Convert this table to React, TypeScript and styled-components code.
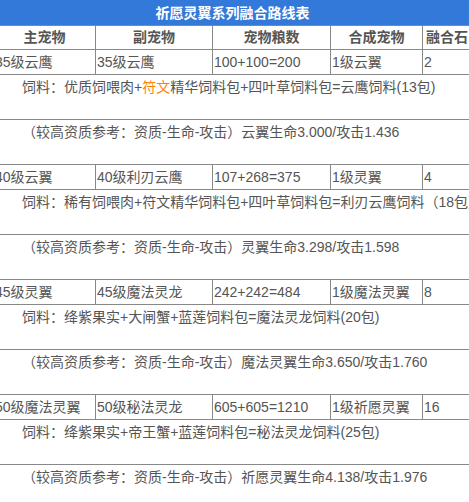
import React from "react";
import styled, { createGlobalStyle } from "styled-components";

const Global = createGlobalStyle`
  html, body { margin: 0; padding: 0; background: #fff; }
  body { overflow: hidden; }
`;

const Viewport = styled.div`
  width: 469px;
  overflow: hidden;
`;

const Table = styled.table`
  margin-left: -7px;
  width: 478px;
  border-collapse: collapse;
  table-layout: fixed;
  font-family: "Liberation Sans", "Noto Sans CJK SC", sans-serif;
  font-size: 14px;
  color: #555;
`;

const Col = styled.col<{ $w: number }>`
  width: ${(p) => p.$w}px;
`;

const TitleCell = styled.th`
  height: 24px;
  padding: 0;
  background: #3379d9;
  color: #fff;
  font-weight: bold;
  font-size: 14px;
  line-height: 24px;
  text-align: center;
  border: 1px solid #3379d9;
  border-bottom: 1px solid #888;
`;

const HeadCell = styled.th`
  height: 23px;
  padding: 0;
  font-weight: bold;
  color: #555;
  line-height: 23px;
  text-align: center;
  border: 1px solid #888;
`;

const DataCell = styled.td`
  height: 24px;
  padding: 0 0 0 1px;
  line-height: 24px;
  text-align: left;
  white-space: nowrap;
  overflow: hidden;
  border: 1px solid #888;
`;

const NoteCell = styled.td`
  height: 42px;
  padding: 2px 0 0;
  vertical-align: top;
  text-align: left;
  text-indent: 2em;
  white-space: nowrap;
  overflow: hidden;
  line-height: 21px;
  border: 1px solid #888;
`;

const Accent = styled.span`
  color: #ff8200;
`;

type Group = {
  cells: string[];
  feed: React.ReactNode;
  ref: string;
};

const groups: Group[] = [
  {
    cells: ["35级云鹰", "35级云鹰", "100+100=200", "1级云翼", "2"],
    feed: (
      <>
        饲料：优质饲喂肉+<Accent>符文</Accent>精华饲料包+四叶草饲料包=云鹰饲料(13包)
      </>
    ),
    ref: "（较高资质参考：资质-生命-攻击）云翼生命3.000/攻击1.436",
  },
  {
    cells: ["40级云翼", "40级利刃云鹰", "107+268=375", "1级灵翼", "4"],
    feed: "饲料：稀有饲喂肉+符文精华饲料包+四叶草饲料包=利刃云鹰饲料（18包）",
    ref: "（较高资质参考：资质-生命-攻击）灵翼生命3.298/攻击1.598",
  },
  {
    cells: ["45级灵翼", "45级魔法灵龙", "242+242=484", "1级魔法灵翼", "8"],
    feed: "饲料：绛紫果实+大闸蟹+蓝莲饲料包=魔法灵龙饲料(20包)",
    ref: "（较高资质参考：资质-生命-攻击）魔法灵翼生命3.650/攻击1.760",
  },
  {
    cells: ["50级魔法灵翼", "50级秘法灵龙", "605+605=1210", "1级祈愿灵翼", "16"],
    feed: "饲料：绛紫果实+帝王蟹+蓝莲饲料包=秘法灵龙饲料(25包)",
    ref: "（较高资质参考：资质-生命-攻击）祈愿灵翼生命4.138/攻击1.976",
  },
];

const headers = ["主宠物", "副宠物", "宠物粮数", "合成宠物", "融合石"];
const widths = [102, 117, 118, 92, 49];

export default function App() {
  return (
    <>
      <Global />
      <Viewport>
        <Table>
          <colgroup>
            {widths.map((w, i) => (
              <Col key={i} $w={w} />
            ))}
          </colgroup>
          <tbody>
            <tr>
              <TitleCell colSpan={5}>祈愿灵翼系列融合路线表</TitleCell>
            </tr>
            <tr>
              {headers.map((h) => (
                <HeadCell key={h}>{h}</HeadCell>
              ))}
            </tr>
            {groups.map((g, i) => (
              <React.Fragment key={i}>
                <tr>
                  {g.cells.map((c, j) => (
                    <DataCell key={j}>{c}</DataCell>
                  ))}
                </tr>
                <tr>
                  <NoteCell colSpan={5}>
                    {g.feed}
                    <br />
                    &nbsp;
                  </NoteCell>
                </tr>
                <tr>
                  <NoteCell colSpan={5}>
                    {g.ref}
                    <br />
                    &nbsp;
                  </NoteCell>
                </tr>
              </React.Fragment>
            ))}
          </tbody>
        </Table>
      </Viewport>
    </>
  );
}
